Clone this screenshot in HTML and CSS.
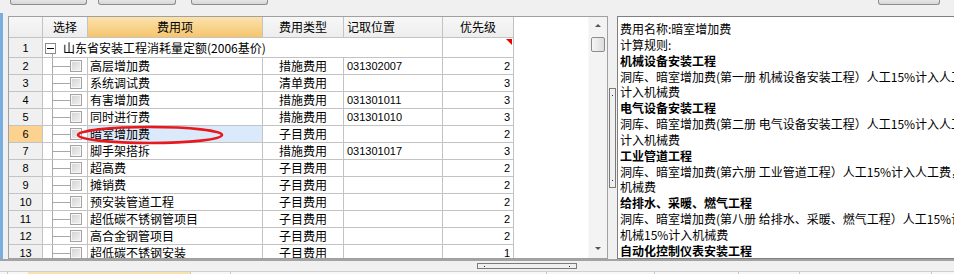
FILE: index.html
```html
<!DOCTYPE html>
<html lang="zh-CN">
<head>
  <meta charset="UTF-8" />
  <title>费用设置</title>
  <link rel="stylesheet" href="styles.css">
</head>
<body>
  <div class="toolbar">
    <span class="tb-btn b1"></span>
    <span class="tb-btn b2"></span>
    <span class="tb-btn b3"></span>
    <span class="tb-btn b4"></span>
  </div>

  <div class="main">
    <div class="side-strip"></div>

    <div class="grid">
      <div class="grid-body">
        <table class="fee-table">
          <colgroup>
            <col class="c-no"><col class="c-sel"><col class="c-name"><col class="c-type"><col class="c-pos"><col class="c-pri">
          </colgroup>
          <tr class="head">
            <th class="no"></th>
            <th>选择</th>
            <th class="sorted">费用项</th>
            <th>费用类型</th>
            <th class="left">记取位置</th>
            <th>优先级</th>
          </tr>
          <tr class="group-row">
            <td class="no num">1</td>
            <td class="group" colspan="4"><span class="minus"></span>山东省安装工程消耗量定额(2006基价)</td>
            <td class="pri flag"></td>
          </tr>
          <tr><td class="no num">2</td><td class="sel"><span class="cb"></span></td><td class="name">高层增加费</td><td class="type">措施费用</td><td class="pos num">031302007</td><td class="pri num">2</td></tr>
          <tr><td class="no num">3</td><td class="sel"><span class="cb"></span></td><td class="name">系统调试费</td><td class="type">清单费用</td><td class="pos num"></td><td class="pri num">3</td></tr>
          <tr><td class="no num">4</td><td class="sel"><span class="cb"></span></td><td class="name">有害增加费</td><td class="type">措施费用</td><td class="pos num">031301011</td><td class="pri num">3</td></tr>
          <tr><td class="no num">5</td><td class="sel"><span class="cb"></span></td><td class="name">同时进行费</td><td class="type">措施费用</td><td class="pos num">031301010</td><td class="pri num">3</td></tr>
          <tr class="current"><td class="no num">6</td><td class="sel"><span class="cb"></span></td><td class="name">暗室增加费</td><td class="type">子目费用</td><td class="pos num"></td><td class="pri num">2</td></tr>
          <tr><td class="no num">7</td><td class="sel"><span class="cb"></span></td><td class="name">脚手架搭拆</td><td class="type">措施费用</td><td class="pos num">031301017</td><td class="pri num">3</td></tr>
          <tr><td class="no num">8</td><td class="sel"><span class="cb"></span></td><td class="name">超高费</td><td class="type">子目费用</td><td class="pos num"></td><td class="pri num">2</td></tr>
          <tr><td class="no num">9</td><td class="sel"><span class="cb"></span></td><td class="name">摊销费</td><td class="type">子目费用</td><td class="pos num"></td><td class="pri num">2</td></tr>
          <tr><td class="no num">10</td><td class="sel"><span class="cb"></span></td><td class="name">预安装管道工程</td><td class="type">子目费用</td><td class="pos num"></td><td class="pri num">2</td></tr>
          <tr><td class="no num">11</td><td class="sel"><span class="cb"></span></td><td class="name">超低碳不锈钢管项目</td><td class="type">子目费用</td><td class="pos num"></td><td class="pri num">2</td></tr>
          <tr><td class="no num">12</td><td class="sel"><span class="cb"></span></td><td class="name">高合金钢管项目</td><td class="type">子目费用</td><td class="pos num"></td><td class="pri num">2</td></tr>
          <tr><td class="no num">13</td><td class="sel"><span class="cb"></span></td><td class="name">超低碳不锈钢安装</td><td class="type">子目费用</td><td class="pos num"></td><td class="pri num">1</td></tr>
        </table>

        <!-- hand-drawn red mark around the selected item -->
        <svg class="mark" width="150" height="20" viewBox="0 0 150 20">
          <ellipse cx="74" cy="10" rx="72" ry="8" fill="none" stroke="#e8191d" stroke-width="2.6" />
        </svg>
      </div>

      <div class="vscroll">
        <span class="arrow up"></span>
        <span class="vthumb"></span>
        <span class="arrow down"></span>
      </div>
    </div>

    <div class="splitter"><span class="split-thumb"></span></div>

    <div class="detail">
      <p>费用名称:暗室增加费</p>
      <p>计算规则:</p>
      <p class="title">机械设备安装工程</p>
      <p>洞库、暗室增加费(第一册 机械设备安装工程）人工15%计入人工</p>
      <p>计入机械费</p>
      <p class="title">电气设备安装工程</p>
      <p>洞库、暗室增加费(第二册 电气设备安装工程）人工15%计入人工</p>
      <p>计入机械费</p>
      <p class="title">工业管道工程</p>
      <p>洞库、暗室增加费(第六册 工业管道工程）人工15%计入人工费，</p>
      <p>机械费</p>
      <p class="title">给排水、采暖、燃气工程</p>
      <p>洞库、暗室增加费(第八册 给排水、采暖、燃气工程）人工15%计</p>
      <p>机械15%计入机械费</p>
      <p class="title">自动化控制仪表安装工程</p>
    </div>
  </div>

  <div class="hbar"></div>
  <div class="hscroll"><span class="hthumb"></span></div>
  <div class="tabs">
    <span class="tab t0"></span>
    <span class="tab t-gap"></span>
    <span class="tab active"></span>
    <span class="tab t3"></span>
    <span class="tab t4"></span>
    <span class="tab t5"></span>
    <span class="tab t6"></span>
    <span class="tab t7"></span>
    <span class="tab t8"></span>
  </div>
</body>
</html>
```

FILE: styles.css
```css
body {
  margin: 0;
  width: 954px;
  height: 274px;
  overflow: hidden;
  background: #f0f0f0;
  font-family: "Noto Sans CJK SC", "Liberation Sans", sans-serif;
  font-size: 12px;
  color: #000;
}

/* toolbar (only the bottoms of the buttons are visible) */
.toolbar {
  display: flex;
  height: 16px;
  padding-left: 10px;
  box-sizing: border-box;
}
.tb-btn {
  display: block;
  height: 4px;
  border: 1px solid #8d8d8d;
  border-top: none;
  border-radius: 0 0 3px 3px;
  background: linear-gradient(#e6e6e6, #d6d6d6);
}
.b1 { width: 75px; }
.b2 { width: 76px; margin-left: 11px; }
.b3 { width: 75px; margin-left: 15px; }
.b4 { width: 60px; margin-left: auto; margin-right: 14px; }

.main {
  display: flex;
  height: 243px;
}
.main > * { flex: none; }
.side-strip {
  width: 3px;
  margin-top: -3px;
  background: #78ade0;
}

/* grid */
.grid {
  display: flex;
  width: 600px;
  margin-left: 5px;
  border: 1px solid #a0a0a0;
  box-sizing: border-box;
  background: #fff;
}
.grid-body {
  position: relative;
  flex: 1;
  overflow: hidden;
  background: #fff;
}
.fee-table {
  table-layout: fixed;
  border-collapse: separate;
  border-spacing: 0;
  width: 505px;
}
.c-no { width: 34px; }
.c-sel { width: 45px; }
.c-name { width: 175px; }
.c-type { width: 81px; }
.c-pos { width: 99px; }
.c-pri { width: 71px; }

.fee-table th,
.fee-table td {
  padding: 0;
  border-right: 1px solid #c3c3c3;
  border-bottom: 1px solid #c3c3c3;
  line-height: 16px;
  white-space: nowrap;
  overflow: hidden;
  font-weight: normal;
}
.fee-table tr { height: 17px; }
.fee-table tr.head { height: 21px; }
.fee-table tr.group-row { height: 20px; }

.fee-table th {
  background: linear-gradient(#f7f7f7, #ededed);
  text-align: center;
}
.fee-table th.left { text-align: left; padding-left: 3px; }
.fee-table th.sorted { background: linear-gradient(#fbe2ad, #f6c56d); }

.num {
  font-family: "Liberation Sans", Arial, sans-serif;
  font-size: 11px;
}
.fee-table td.no {
  background: #f0f0f0;
  text-align: center;
}
.fee-table tr.current td.no { background: #fcd291; }
.fee-table tr.current td.name { background: #dbeafb; }

.fee-table td.name { padding-left: 2px; }
.fee-table td.type { text-align: center; }
.fee-table td.pos { padding-left: 3px; }
.fee-table td.pri { text-align: right; padding-right: 3px; }

.fee-table td.flag { position: relative; }
.fee-table td.flag::after {
  content: "";
  position: absolute;
  top: 1px;
  right: 1px;
  border-left: 6px solid transparent;
  border-top: 6px solid #e00;
}

/* tree lines + check boxes */
.fee-table td.sel {
  background:
    linear-gradient(#a8a8a8, #a8a8a8) no-repeat 9px 0 / 1px 100%,
    linear-gradient(#a8a8a8, #a8a8a8) no-repeat 9px 50% / 18px 1px;
}
.cb {
  display: block;
  width: 10px;
  height: 10px;
  margin-left: 27px;
  border: 1px solid #a3a3a3;
  box-shadow: inset 0 0 0 1px #f7f7f7;
  background: linear-gradient(135deg, #d2d2d2, #f3f3f3);
}
.fee-table td.group {
  background: linear-gradient(#a8a8a8, #a8a8a8) no-repeat 9px 100% / 1px 3px;
}
.minus {
  display: inline-block;
  vertical-align: middle;
  width: 9px;
  height: 9px;
  margin: -2px 7px 0 2px;
  border: 1px solid #8a8a8a;
  background: linear-gradient(#000, #000) no-repeat center / 7px 1px, #fff;
}

.mark {
  position: absolute;
  left: 67px;
  top: 108px;
}

/* vertical scrollbar */
.vscroll {
  display: flex;
  flex-direction: column;
  align-items: center;
  width: 18px;
  background: #f3f3f3;
  border-left: 1px solid #f8f8f8;
}
.arrow {
  display: block;
  width: 0;
  height: 0;
  border-left: 3px solid transparent;
  border-right: 3px solid transparent;
}
.arrow.up {
  margin-top: 7px;
  border-bottom: 3px solid #555;
}
.arrow.down {
  margin-top: auto;
  margin-bottom: 8px;
  border-top: 3px solid #555;
}
.vthumb {
  display: block;
  width: 12px;
  height: 13px;
  margin-top: 10px;
  border: 1px solid #8c8c8c;
  border-radius: 2px;
  background: linear-gradient(90deg, #f6f6f6, #dcdcdc);
}

/* splitter */
.splitter {
  width: 9px;
  padding-left: 1px;
  box-sizing: border-box;
}
.split-thumb {
  display: block;
  width: 5px;
  height: 98px;
  margin-top: 72px;
  border: 1px solid #7a7a7a;
  background:
    linear-gradient(#1a1aa0, #1a1aa0) no-repeat 2px 6px / 1px 1px,
    linear-gradient(#1a1aa0, #1a1aa0) no-repeat 2px 91px / 1px 1px,
    #f0f0f0;
}

/* detail panel: its right edge lies outside the window */
.main > .detail {
  flex: 1;
  min-width: 0;
  border: 1px solid #7f7f7f;
  border-right: none;
  background: #fff;
  padding: 4px 0 0 2px;
  box-sizing: border-box;
  overflow: hidden;
}
.detail p {
  margin: 0;
  line-height: 15.85px;
  white-space: nowrap;
  overflow: hidden;
}
.detail p.title { font-weight: bold; }

/* bottom strips */
.hbar {
  height: 2px;
  background: #a3a3a3;
}
.hscroll {
  height: 10px;
  padding-top: 2px;
  box-sizing: border-box;
}
.hthumb {
  display: block;
  width: 98px;
  height: 4px;
  margin-left: 477px;
  border: 1px solid #7a7a7a;
  background:
    linear-gradient(#1a1aa0, #1a1aa0) no-repeat 6px 2px / 1px 1px,
    linear-gradient(#1a1aa0, #1a1aa0) no-repeat 91px 2px / 1px 1px,
    #f0f0f0;
}
.tabs {
  display: flex;
  height: 4px;
  border-top: 1px solid #cfcfcf;
  background: #f7f7f7;
}
.tab {
  display: block;
  border-right: 1px solid #c8c8c8;
}
.t0 { width: 7px; }
.t-gap { width: 20px; border-right: none; }
.tab.active { width: 162px; background: #fbe1b0; }
.t3 { width: 39px; }
.t4 { width: 315px; }
.t5 { width: 107px; }
.t6 { width: 83px; }
.t7 { width: 60px; }
.t8 { width: 131px; }
```
